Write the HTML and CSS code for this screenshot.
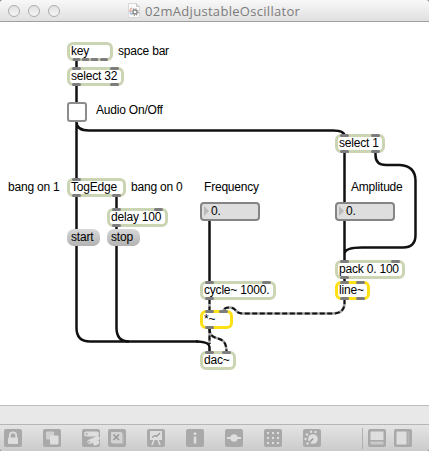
FILE: index.html
```html
<!DOCTYPE html>
<html lang="en">
<head>
<meta charset="utf-8">
<title>02mAdjustableOscillator</title>
<link rel="stylesheet" href="styles.css">
</head>
<body>
<div class="window">
<header class="titlebar">
  <div class="lights"><i></i><i></i><i></i></div>
  <div class="title">
    <svg class="doc" width="12" height="15" viewBox="0 0 12 15"><path d="M.5.5h8l3 3v11H.5z" fill="#fafafa" stroke="#d8d8d8"/><path d="M8.500.5v3h3" fill="#ddd" stroke="#c8c8c8"/><path d="M2 9a4 4 0 0 1 2-4" fill="none" stroke="#edb0a0" stroke-width="1.500"/><path d="M2 9l1.500 3" stroke="#9fc7e4" stroke-width="1.500"/><circle cx="7" cy="9" r="2" fill="none" stroke="#8a8a8a" stroke-width="1.300"/><circle cx="7" cy="9" r="3.200" fill="none" stroke="#8a8a8a" stroke-width="1.200" stroke-dasharray="1.250 1.260"/></svg>
    <span>02mAdjustableOscillator</span>
  </div>
</header>
<main class="canvas">
  <svg class="layer" width="429" height="383" viewBox="0 22 429 383">
    <g class="cord">
      <path d="M76.500 60V328Q76.500 341.500 90 341.500H198M76.500 122C76.500 127 80 130.500 89 130.500H333Q344.500 130.500 344.500 136"/>
      <path d="M344.500 152V283M375.500 152V155Q375.500 165 386 165H400Q415.500 166 415.500 181V235Q415.500 247.500 403 247.500H362Q344.500 247.500 344.500 254"/>
      <path d="M116.500 196V328Q116.500 341.500 129 341.500M209.500 220V282"/>
    </g>
    <g class="signal-base"><path id="s1" d="M209.500 299V310"/><path id="s2" d="M209.500 328V344"/><path id="s3" d="M209.500 328C209.500 345 226.500 331 226.500 352"/><path id="s4" d="M344.500 299V303Q344.500 313.500 333 313.500H243C234 313.500 237 307.500 230 307.500Q223.500 307.500 223.500 311"/></g>
    <g class="signal-dash"><use href="#s1"/><use href="#s2"/><use href="#s3"/><use href="#s4"/></g>
    <path class="cord" d="M196 341.500H198Q209.500 342 209.500 347V352"/>
  </svg>

  <div class="obj key">key</div>
  <div class="obj select32">select 32</div>
  <div class="toggle"></div>
  <div class="obj togedge">TogEdge</div>
  <div class="obj delay">delay 100</div>
  <div class="msg start">start</div>
  <div class="msg stop">stop</div>
  <div class="num freq">0.</div>
  <div class="num amp">0.</div>
  <div class="obj select1">select 1</div>
  <div class="obj pack">pack 0. 100</div>
  <div class="obj audio line">line~</div>
  <div class="obj cycle">cycle~ 1000.</div>
  <div class="obj audio times">*~</div>
  <div class="obj dac">dac~</div>

  <div class="note n-space">space bar</div>
  <div class="note n-audio">Audio On/Off</div>
  <div class="note n-bang1">bang on 1</div>
  <div class="note n-bang0">bang on 0</div>
  <div class="note n-freq">Frequency</div>
  <div class="note n-amp">Amplitude</div>

  <svg class="layer" width="429" height="383" viewBox="0 22 429 383">
    <path class="port" d="M74 59.500h5M83 59.500h5M92 59.500h5M101.500 59.500h5
      M73.500 68.500h6M111.500 68.500h6M73.500 84.500h6M111.500 84.500h6
      M73.500 179.500h6M73.500 195.500h6M113.500 195.500h6
      M113.500 209.500h6M155.500 209.500h6M113.500 225.500h6
      M341.500 135.500h6M372.500 135.500h6M341.500 151.500h6M372.500 151.500h6
      M341.500 261.500h6M392.500 261.500h6M341.500 277.500h6
      M341.500 282.500h6M357.500 282.500h6M341.500 298.500h6M357.500 298.500h6
      M206.500 282.500h6M263.500 282.500h6M206.500 298.500h6
      M206.500 311.500h6M220.500 311.500h6M206.500 327.500h6
      M206.500 352.500h6M223.500 352.500h6"/>
  </svg>
</main>
<div class="status"></div>
<footer class="toolbar">
  <svg class="g1" viewBox="0 0 18 18"><rect class="b" width="18" height="18" rx="2"/><path class="l" d="M5.800 9V6.500a3.200 3.200 0 0 1 6.400 0V9" stroke-width="1.700"/><rect class="f" x="4" y="8.500" width="10" height="6.500" rx="1"/></svg>
  <svg class="g2" viewBox="0 0 18 18"><rect class="b" width="18" height="18" rx="2"/><rect class="f" x="3" y="2.500" width="8" height="8" rx="1" opacity=".75"/><rect class="f" x="7" y="6.500" width="8.500" height="9" rx="1"/></svg>
  <svg class="g3" viewBox="0 0 18 18"><rect class="b" width="18" height="18" rx="2"/><rect class="f" x="2" y="2.500" width="15" height="5" rx="2.400"/><rect class="f" x="5" y="9" width="13" height="4.500" rx="2.200" transform="rotate(-24 11 11)"/><rect class="f" x="11" y="12" width="6.500" height="4" rx="2" transform="rotate(-24 14 14)"/><circle cx="4.700" cy="5" r="1.300" fill="#bbb"/><circle cx="7" cy="13" r="1.200" fill="#bbb"/></svg>
  <svg class="g4" viewBox="0 0 18 18"><rect class="b" width="18" height="18" rx="2"/><rect x="4.500" y="4" width="11" height="11" rx="1" fill="#bdbdbd"/><rect x="3" y="3" width="11" height="11" rx="1" fill="#d3d3d3"/><path d="M5.500 5.500l5.500 5.500M11 5.500l-5.500 5.500" stroke="#999" stroke-width="1.700"/></svg>
  <svg class="g5" viewBox="0 0 18 18"><rect class="b" width="18" height="18" rx="2"/><rect class="f" x="3" y="2" width="12" height="9"/><path class="l" d="M7 11l-2 5M11 11l2 5" stroke-width="1.500"/><path d="M5 8.500l3-2 1.500 1L13 4" fill="none" stroke="#999" stroke-width="1.200"/></svg>
  <svg class="g6" viewBox="0 0 18 18"><rect class="b" width="18" height="18" rx="2"/><path class="l" d="M9 3.500v2.500M9 7.500v7" stroke-width="2.600"/></svg>
  <svg class="g7" viewBox="0 0 18 18"><rect class="b" width="18" height="18" rx="2"/><path class="l" d="M2 9h14" stroke-width="1.800"/><circle class="f" cx="9" cy="9" r="3.700"/></svg>
  <svg class="g8" viewBox="0 0 18 18"><rect class="b" width="18" height="18" rx="2"/><path class="l" d="M3 4h12M3 9h12M3 14h12" stroke-width="2" stroke-dasharray="2 3"/></svg>
  <svg class="g9" viewBox="0 0 18 18"><rect class="b" width="18" height="18" rx="2"/><circle class="f" cx="10" cy="10" r="4.800"/><path d="M10 9.500l-3.500 4" stroke="#999" stroke-width="1.500"/><g class="f"><circle cx="2.500" cy="10" r="1.200"/><circle cx="4" cy="5.500" r="1.200"/><circle cx="8" cy="2.800" r="1.200"/><circle cx="12.500" cy="3" r="1.200"/><circle cx="4.500" cy="14.500" r="1.200"/></g></svg>
  <span class="divider"></span>
  <svg class="g10" viewBox="0 0 18 18"><rect class="b" width="18" height="18" rx="2"/><rect class="f" x="2.500" y="2.500" width="13" height="8.500"/><rect x="2.500" y="12.500" width="13" height="3" fill="#cacaca"/></svg>
  <svg class="g11" viewBox="0 0 18 18"><rect class="b" width="18" height="18" rx="2"/><rect class="f" x="2.500" y="2.500" width="10" height="13"/><rect x="13.500" y="2.500" width="2" height="13" fill="#b5b5b5"/></svg>
</footer>
</div>
</body>
</html>
```
FILE: styles.css
```css
* { box-sizing: border-box; }
body { margin: 0; background: #9a9a9a; font: 12px/14px "Liberation Sans", sans-serif; letter-spacing: -.2px; color: #000; }
.window { width: 429px; height: 451px; display: flex; flex-direction: column; overflow: hidden; background: #fff; border-radius: 4px; }
.titlebar { height: 22px; flex: none; display: flex; align-items: center; padding-left: 8px; background: linear-gradient(#f8f8f8, #e0e0e0); border-bottom: 1px solid #a0a0a0; }
.lights { display: flex; gap: 8px; width: 120px; }
.lights i { width: 12px; height: 12px; border: 1px solid #acacac; border-radius: 50%; background: linear-gradient(#e2e2e2, #f5f5f5); }
.title { display: flex; align-items: center; gap: 5px; font: 13px/20px "Open Sans", sans-serif; color: #7c7c7c; white-space: nowrap; }
.title span { letter-spacing: .3px; }
.canvas { position: relative; height: 383px; flex: none; background: #fff; }
.layer { position: absolute; left: 0; top: 0; }
.cord { fill: none; stroke: #111; stroke-width: 2.5; }
.signal-base { fill: none; stroke: #a5a5a5; stroke-width: 2.6; }
.signal-dash { fill: none; stroke: #111; stroke-width: 2; stroke-dasharray: 5 2.5; }
.port { stroke: #7d7d7d; stroke-width: 3; stroke-linecap: round; fill: none; }
.obj, .msg, .num, .note, .toggle { position: absolute; white-space: nowrap; }
.obj { height: 19px; border: 3px solid #ccd5b3; border-radius: 6px; background: #fff; padding-left: 1px; line-height: 12px; }
.audio { border-color: #ffe014; }
.key { left: 67px; top: 20px; width: 46px; }
.select32 { left: 67px; top: 45px; width: 57px; }
.toggle { left: 67px; top: 80px; width: 20px; height: 20px; border: 2px solid #8c8c8c; border-radius: 3px; background: #fff; }
.togedge { left: 67px; top: 156px; width: 59px; }
.delay { left: 107px; top: 186px; width: 61px; }
.msg { top: 207px; height: 17px; border-radius: 7px; padding-left: 4px; line-height: 17px; background: linear-gradient(#d8d8d8, #b2b2b2); }
.start { left: 67px; width: 33px; }
.stop { left: 107px; width: 33px; }
.num { top: 180px; width: 60px; height: 19px; border: 2px solid #858585; border-radius: 4px; background: #dedede; line-height: 15px; padding-left: 9px; }
.num::before { content: ""; position: absolute; left: 2px; top: 2px; border-left: 5px solid #b9b9b9; border-top: 5px solid transparent; border-bottom: 5px solid transparent; }
.freq { left: 200px; }
.amp { left: 335px; }
.select1 { left: 335px; top: 112px; width: 50px; }
.pack { left: 335px; top: 238px; width: 70px; }
.line { left: 335px; top: 259px; width: 35px; }
.cycle { left: 200px; top: 259px; width: 76px; }
.times { left: 200px; top: 288px; width: 33px; }
.dac { left: 200px; top: 329px; width: 36px; }
.n-space { left: 118px; top: 22px; }
.n-audio { left: 96px; top: 81px; }
.n-bang1 { left: 8px; top: 158px; }
.n-bang0 { left: 131px; top: 158px; }
.n-freq { left: 204px; top: 158px; }
.n-amp { left: 351px; top: 158px; }
.status { height: 19px; flex: none; background: #e8e8e8; border-top: 1px solid #bdbdbd; }
.toolbar { height: 27px; flex: none; display: flex; align-items: flex-start; padding: 5px 0 0 4px; gap: 21px; background: linear-gradient(#e4e4e4, #cbcbcb); border-top: 1px solid #b5b5b5; }
.toolbar svg { width: 18px; height: 18px; flex: none; margin-top: -1px; }
.toolbar .g4 { margin-left: -13px; }
.b { fill: #a9a9a9; }
.f { fill: #dedede; }
.l { stroke: #dedede; fill: none; }
.divider { width: 1px; height: 21px; margin: -2px -16px 0 20px; background: #b0b0b0; }
.toolbar .g11 { margin-left: -13px; }
```
